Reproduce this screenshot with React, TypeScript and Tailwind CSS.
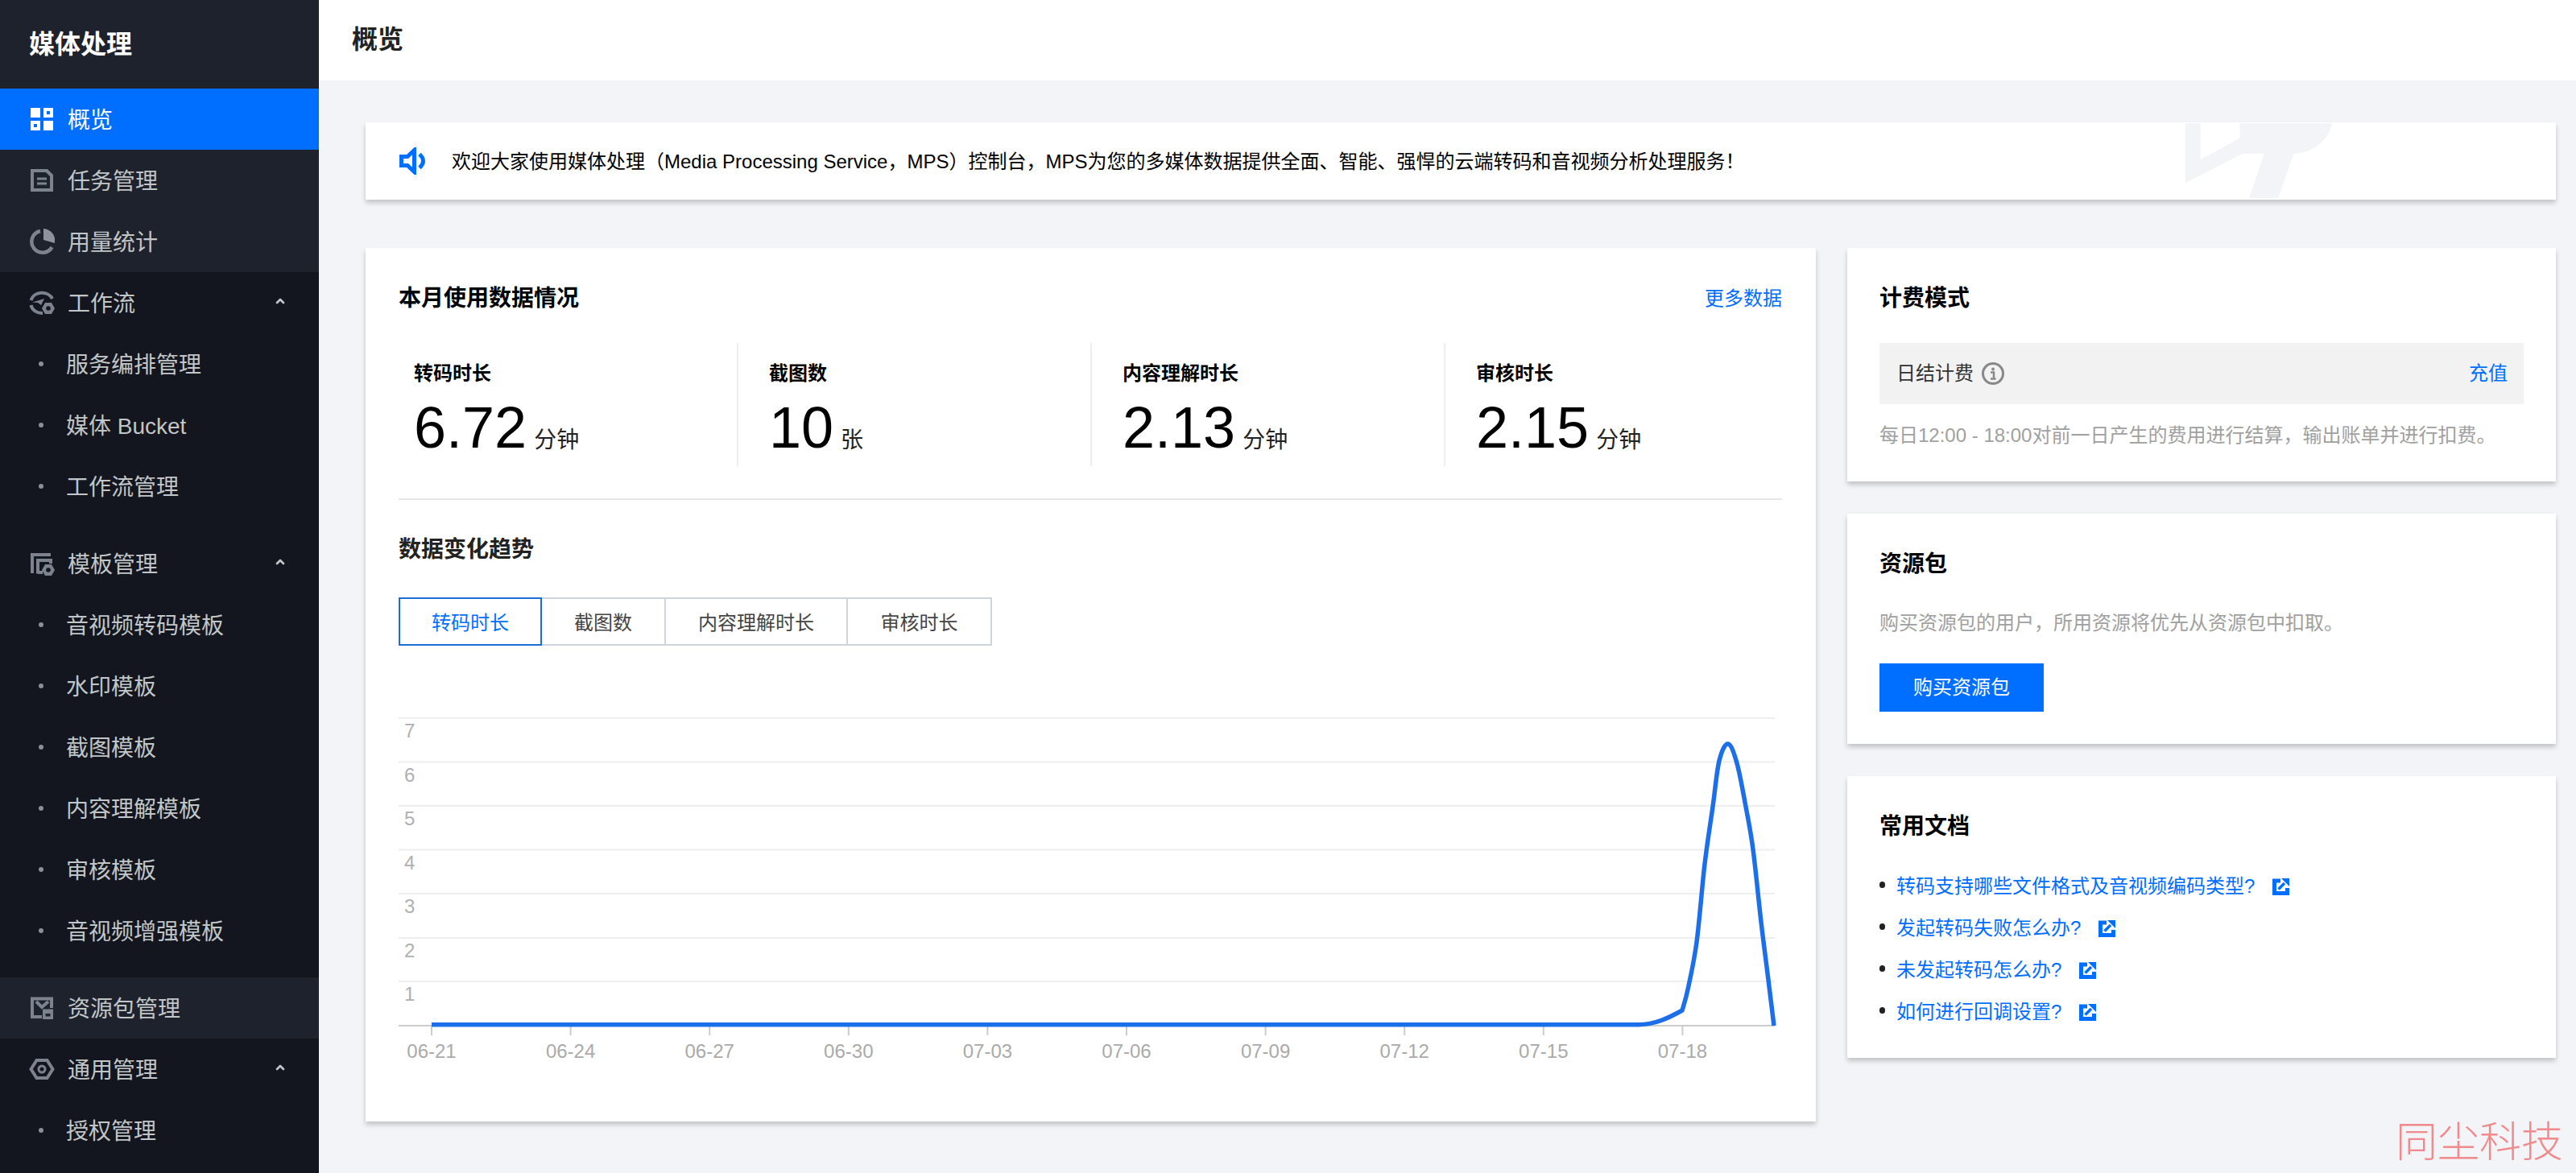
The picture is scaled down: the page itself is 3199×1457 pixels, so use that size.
import { ChevronUp } from "lucide-react";

const font = { fontFamily: '"Liberation Sans", "Noto Sans CJK SC", sans-serif' };

const smoothPath = (pts: number[][]) => {
  let d = "";
  for (let i = 0; i < pts.length - 1; i++) {
    const p0 = pts[i - 1] || pts[i];
    const p1 = pts[i];
    const p2 = pts[i + 1];
    const p3 = pts[i + 2] || p2;
    const c1 = [p1[0] + (p2[0] - p0[0]) / 6, p1[1] + (p2[1] - p0[1]) / 6];
    const c2 = [p2[0] - (p3[0] - p1[0]) / 6, p2[1] - (p3[1] - p1[1]) / 6];
    d += ` C${c1[0]} ${c1[1]} ${c2[0]} ${c2[1]} ${p2[0]} ${p2[1]}`;
  }
  return d;
};

const linePath =
  "M41 393.7 H1540 C1560 393.7 1578 385 1594 376" +
  smoothPath([
    [1594, 376],
    [1601, 350],
    [1612, 291],
    [1622, 194],
    [1632, 123],
    [1640, 66],
    [1651, 45],
    [1662, 69],
    [1673, 123],
    [1682, 176],
    [1692, 266],
    [1700, 330],
    [1708, 395],
  ]);

const Hex = ({ cx, cy }: { cx: number; cy: number }) => (
  <g>
    <path d={`M${cx - 8} ${cy} L${cx - 4} ${cy - 7} H${cx + 4} L${cx + 8} ${cy} L${cx + 4} ${cy + 7} H${cx - 4} Z`} fill="#7c838e" />
    <circle cx={cx} cy={cy} r="2.8" fill="#13161f" />
  </g>
);

const IconOverview = () => (
  <svg viewBox="0 0 32 32" className="w-8 h-8" fill="#fff">
    <rect x="2" y="2" width="12" height="12" />
    <path fillRule="evenodd" d="M18 2h12v12H18z M22 6v4h4V6z" />
    <path fillRule="evenodd" d="M2 18h12v12H2z M6 22v4h4v-4z" />
    <rect x="18" y="18" width="12" height="12" />
  </svg>
);

const IconTask = () => (
  <svg viewBox="0 0 32 32" className="w-8 h-8" fill="#7c838e">
    <path fillRule="evenodd" d="M2 2H23L30 9V30H2Z M6 6V26H26V11L21 6Z" />
    <rect x="10" y="12.5" width="12" height="3" />
    <rect x="10" y="18.5" width="12" height="3" />
  </svg>
);

const IconPie = () => (
  <svg viewBox="0 0 32 32" className="w-8 h-8" fill="none">
    <path d="M14 3 A13.5 13.5 0 1 0 28.5 23" stroke="#7c838e" strokeWidth="4.5" />
    <path d="M18 0 A15 15 0 0 1 32 18 L18 14Z" fill="#8d939c" />
  </svg>
);

const IconFlow = () => (
  <svg viewBox="0 0 32 32" className="w-8 h-8" fill="none">
    <path d="M2.5 13 A14 12 0 0 1 29 11" stroke="#7c838e" strokeWidth="4" />
    <path d="M2.5 19 A14 12 0 0 0 17 29" stroke="#7c838e" strokeWidth="4" />
    <path d="M4 15.5 L19 11 L15 19 L11 16Z" fill="#7c838e" />
    <Hex cx={24} cy={23} />
  </svg>
);

const IconTemplate = () => (
  <svg viewBox="0 0 32 32" className="w-8 h-8" fill="none">
    <path d="M4 28 V5 H27" stroke="#7c838e" strokeWidth="4" />
    <path d="M11 28.5 V12 H27 V16" stroke="#7c838e" strokeWidth="4" />
    <path d="M11 27 H17" stroke="#7c838e" strokeWidth="4" />
    <Hex cx={24} cy={24} />
  </svg>
);

const IconPackage = () => (
  <svg viewBox="0 0 32 32" className="w-8 h-8" fill="none">
    <path d="M16 27H4V4.5H28V16" stroke="#7c838e" strokeWidth="4" />
    <path d="M9 8 L16 15 L24 8" stroke="#7c838e" strokeWidth="4" />
    <path d="M17 17.5H30V30H17Z" fill="#7c838e" />
    <rect x="20.5" y="23" width="6" height="3.5" fill="#1e222d" />
  </svg>
);

const IconGeneral = () => (
  <svg viewBox="0 0 32 32" className="w-8 h-8" fill="none">
    <path d="M2.5 16 L9.5 5 H22.5 L29.5 16 L22.5 27 H9.5 Z" stroke="#7c838e" strokeWidth="4" />
    <circle cx="16" cy="16" r="4" stroke="#7c838e" strokeWidth="3" />
  </svg>
);

type NavItem = { label: string; icon?: React.ReactNode; active?: boolean; lighter?: boolean; group?: boolean; sub?: boolean; mb?: boolean };

const nav: NavItem[] = [
  { label: "概览", icon: <IconOverview />, active: true },
  { label: "任务管理", icon: <IconTask />, lighter: true },
  { label: "用量统计", icon: <IconPie />, lighter: true },
  { label: "工作流", icon: <IconFlow />, group: true },
  { label: "服务编排管理", sub: true },
  { label: "媒体 Bucket", sub: true },
  { label: "工作流管理", sub: true, mb: true },
  { label: "模板管理", icon: <IconTemplate />, group: true },
  { label: "音视频转码模板", sub: true },
  { label: "水印模板", sub: true },
  { label: "截图模板", sub: true },
  { label: "内容理解模板", sub: true },
  { label: "审核模板", sub: true },
  { label: "音视频增强模板", sub: true, mb: true },
  { label: "资源包管理", icon: <IconPackage />, lighter: true },
  { label: "通用管理", icon: <IconGeneral />, group: true },
  { label: "授权管理", sub: true },
];

function Sidebar() {
  return (
    <aside className="w-[396px] shrink-0 h-full overflow-hidden bg-[#13161f]">
      <div className="h-[110px] bg-[#1e222d] flex items-center pl-[36px] text-[32px] font-bold text-white">媒体处理</div>
      {nav.map((item) => {
        if (item.sub) {
          return (
            <div key={item.label} className={`h-[76px] flex items-center pl-[48px] text-[28px] text-[#c1c6c8] ${item.mb ? "mb-[20px]" : ""}`}>
              <span className="w-[6px] h-[6px] rounded-full bg-[#8a8f98] mr-[28px]" />
              <span className="pt-[3px]">{item.label}</span>
            </div>
          );
        }
        const bg = item.active ? "bg-[#006eff] text-white" : item.lighter ? "bg-[#1e222d] text-[#c1c6c8]" : "text-[#c1c6c8]";
        return (
          <div key={item.label} className={`h-[76px] flex items-center pl-[36px] pr-[40px] text-[28px] ${bg}`}>
            {item.icon}
            <span className="ml-[16px] pt-[3px] flex-1">{item.label}</span>
            {item.group && <ChevronUp className="w-[16px] h-[16px] mb-[4px] text-[#c1c6c8]" strokeWidth={4} />}
          </div>
        );
      })}
    </aside>
  );
}

const stats = [
  { label: "转码时长", value: "6.72", unit: "分钟", cls: "w-[420px] pl-[19px]" },
  { label: "截图数", value: "10", unit: "张", cls: "w-[439px] pl-[38px] border-l-2 border-[#eeeeee]" },
  { label: "内容理解时长", value: "2.13", unit: "分钟", cls: "w-[439px] pl-[38px] border-l-2 border-[#eeeeee]" },
  { label: "审核时长", value: "2.15", unit: "分钟", cls: "flex-1 pl-[38px] border-l-2 border-[#eeeeee]" },
];

const tabs = [
  { label: "转码时长", cls: "w-[178px] border-[#1a6fd5] text-[#006eff] z-10" },
  { label: "截图数", cls: "w-[156px] -ml-[2px] border-[#cfd5de] text-[#444444]" },
  { label: "内容理解时长", cls: "w-[228px] -ml-[2px] border-[#cfd5de] text-[#444444]" },
  { label: "审核时长", cls: "w-[181px] -ml-[2px] border-[#cfd5de] text-[#444444]" },
];

const gridY = [13, 67.5, 122, 176.5, 231, 286, 340];
const xLabels = ["06-21", "06-24", "06-27", "06-30", "07-03", "07-06", "07-09", "07-12", "07-15", "07-18"];

function Chart() {
  return (
    <svg width="1718" height="450" viewBox="0 0 1718 450" className="mt-[77px] block" style={font}>
      {gridY.map((y, i) => (
        <g key={y}>
          <line x1="0" x2="1709" y1={y} y2={y} stroke="#eeeeee" strokeWidth="2" />
          <text x="7" y={y + 24} fontSize="24" fill="#b0b0b0">{7 - i}</text>
        </g>
      ))}
      <line x1="0" x2="1709" y1="395" y2="395" stroke="#cccccc" strokeWidth="2" />
      {xLabels.map((t, i) => (
        <g key={t}>
          <line x1={41 + 172.6 * i} x2={41 + 172.6 * i} y1="395" y2="407" stroke="#cccccc" strokeWidth="2" />
          <text x={41 + 172.6 * i} y="435" fontSize="24" fill="#aaaaaa" textAnchor="middle">{t}</text>
        </g>
      ))}
      <path d={linePath} fill="none" stroke="#1c6fe9" strokeWidth="5.5" strokeLinejoin="round" />
    </svg>
  );
}

const card = "bg-white shadow-[0_4px_6px_0_rgba(0,0,0,0.2)]";

const docs = ["转码支持哪些文件格式及音视频编码类型?", "发起转码失败怎么办?", "未发起转码怎么办?", "如何进行回调设置?"];

const ExtLink = () => (
  <svg viewBox="0 0 21 21" className="w-[21px] h-[21px] ml-[22px] shrink-0" fill="none">
    <path d="M10 3 H2.5 V18.5 H18.5 V12" stroke="#006eff" strokeWidth="5" />
    <path d="M11 0 H21 V10 Z" fill="#006eff" />
    <path d="M7.5 13.5 L15 6" stroke="#006eff" strokeWidth="3.5" />
  </svg>
);

export default function App() {
  return (
    <div className="relative flex w-full h-screen overflow-hidden bg-[#f3f4f7] text-black" style={font}>
      <Sidebar />
      <main className="flex-1 min-w-0 flex flex-col">
        <header className="h-[100px] bg-white flex items-center pl-[41px] pb-[3px] text-[32px] font-bold text-[#222222]">概览</header>
        <div className="pl-[58px] pr-[25px] pt-[52px]">
          <section className={`${card} relative h-[96px] flex items-center pl-[42px] overflow-hidden`}>
            <svg viewBox="0 0 200 96" className="absolute top-0 right-[274px] w-[200px] h-[96px]" fill="#f3f4f7">
              <path d="M14 1 H32.6 V46.3 L81.5 19.7 V1 H196 C192 22 172 38.7 148.4 38.7 L129.3 94 H93 L112 38.7 H85.3 L14 75.3 Z" />
            </svg>
            <svg viewBox="0 0 34 34" className="w-[34px] h-[34px] mr-[31px]" fill="none">
              <path d="M2.5 11.5 H10 L18.5 3.5 V30.5 L10 22.5 H2.5 Z" stroke="#006eff" strokeWidth="5" />
              <path d="M25 8.5 C31 14 31 20 25 25.5" stroke="#006eff" strokeWidth="5" />
            </svg>
            <span className="relative text-[24px] pt-[2px]">欢迎大家使用媒体处理（Media Processing Service，MPS）控制台，MPS为您的多媒体数据提供全面、智能、强悍的云端转码和音视频分析处理服务！</span>
          </section>

          <div className="flex gap-[39px] mt-[60px] items-start">
            <section className={`${card} w-[1801px] h-[1085px] pt-[41px] pl-[41px] pr-[42px]`}>
              <div className="flex items-center justify-between h-[40px] pt-[4px]">
                <h2 className="text-[28px] font-bold">本月使用数据情况</h2>
                <a className="text-[24px] text-[#006eff]">更多数据</a>
              </div>
              <div className="flex h-[153px] mt-[37px]">
                {stats.map((s) => (
                  <div key={s.label} className={`${s.cls} pt-[22px]`}>
                    <div className="text-[24px] leading-[32px] font-bold">{s.label}</div>
                    <div className="flex items-baseline mt-[15px]">
                      <span className="text-[72px] leading-[72px]">{s.value}</span>
                      <span className="text-[28px] ml-[9px] text-[#222222]">{s.unit}</span>
                    </div>
                  </div>
                ))}
              </div>
              <div className="h-[2px] bg-[#e8e8e8] mt-[40px]" />
              <h2 className="text-[28px] leading-[40px] font-bold text-[#222222] mt-[42px]">数据变化趋势</h2>
              <div className="flex mt-[39px]">
                {tabs.map((t) => (
                  <div key={t.label} className={`${t.cls} relative h-[60px] border-2 pt-[3px] flex items-center justify-center text-[24px]`}>{t.label}</div>
                ))}
              </div>
              <Chart />
            </section>

            <div className="flex-1 flex flex-col gap-[40px]">
              <section className={`${card} h-[290px] pt-[43px] px-[40px]`}>
                <h2 className="text-[28px] leading-[40px] font-bold">计费模式</h2>
                <div className="h-[76px] mt-[35px] bg-[#f2f2f2] flex items-center pl-[21px] pr-[20px] text-[24px]">
                  <span className="text-[#333333]">日结计费</span>
                  <svg viewBox="0 0 28 28" className="w-[28px] h-[28px] ml-[10px]" fill="none">
                    <circle cx="14" cy="14" r="12.5" stroke="#888888" strokeWidth="3" />
                    <circle cx="14" cy="8.5" r="2" fill="#888888" />
                    <path d="M11 12.5H15V20 M11 20.5H17.5" stroke="#888888" strokeWidth="2.5" />
                  </svg>
                  <a className="ml-auto text-[#006eff]">充值</a>
                </div>
                <p className="text-[24px] leading-[36px] text-[#a0a0a0] mt-[21px]">每日12:00 - 18:00对前一日产生的费用进行结算，输出账单并进行扣费。</p>
              </section>

              <section className={`${card} h-[286px] pt-[43px] px-[40px]`}>
                <h2 className="text-[28px] leading-[40px] font-bold">资源包</h2>
                <p className="text-[24px] leading-[36px] text-[#a0a0a0] mt-[35px]">购买资源包的用户，所用资源将优先从资源包中扣取。</p>
                <button className="block w-[204px] h-[60px] mt-[32px] bg-[#006eff] text-white text-[24px]">购买资源包</button>
              </section>

              <section className={`${card} h-[350px] pt-[43px] px-[40px]`}>
                <h2 className="text-[28px] leading-[40px] font-bold">常用文档</h2>
                <ul className="mt-[28px]">
                  {docs.map((d) => (
                    <li key={d} className="h-[52px] flex items-center text-[24px] text-[#006eff]">
                      <span className="w-[7px] h-[8px] rounded-full bg-[#222222] mr-[14px] -mt-[4px]" />
                      {d}
                      <ExtLink />
                    </li>
                  ))}
                </ul>
              </section>
            </div>
          </div>
        </div>
      </main>
      <div className="absolute right-[16px] bottom-[8px] text-[52px] leading-[60px] font-light text-[#f08a8c]">同尘科技</div>
    </div>
  );
}
